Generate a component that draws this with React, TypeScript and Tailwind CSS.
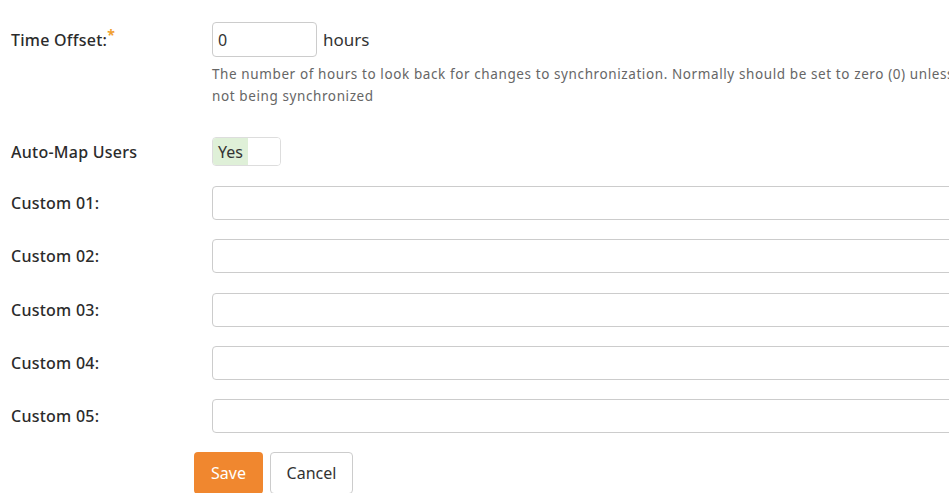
import React from "react";

const font = { fontFamily: '"Noto Sans", "Open Sans", Arial, sans-serif' };

function Label({ children }: { children: React.ReactNode }) {
  return (
    <div className="w-[201px] shrink-0 text-[16px] font-medium tracking-[0.25px] text-[#2b2b2b]">{children}</div>
  );
}

function CustomRow({ label }: { label: string }) {
  return (
    <div className="flex items-center">
      <Label>{label}</Label>
      <input
        className="h-[34px] w-[800px] shrink-0 rounded-[4px] border border-[#ccc] bg-white px-2 outline-none"
        type="text"
      />
    </div>
  );
}

export default function App() {
  return (
    <div className="h-[493px] w-[949px] overflow-hidden bg-white" style={font}>
      <div className="w-[1200px] pl-[11px] pt-[22px]">
        <div className="flex items-center">
          <Label>
            Time Offset:<span className="relative -top-[6px] text-[14px] font-bold text-[#f0a030]">*</span>
          </Label>
          <input
            className="h-[35px] w-[105px] rounded-[4px] border border-[#ccc] bg-white px-[5px] text-[16px] text-[#333] outline-none"
            defaultValue="0"
            type="text"
          />
          <span className="ml-[6px] text-[17px] text-[#333]">hours</span>
        </div>
        <div className="ml-[201px] mt-[6px] whitespace-nowrap text-[13.5px] leading-[22px] tracking-[0.6px] text-[#666]">
          The number of hours to look back for changes to synchronization. Normally should be set to zero (0) unless you find that some changes are
          <br />
          not being synchronized
        </div>
        <div className="mt-[30px] flex items-center">
          <Label>Auto-Map Users</Label>
          <div className="flex h-[29px] w-[69px] overflow-hidden rounded-[4px] border border-[#ddd]">
            <div className="flex w-[35px] items-center justify-center bg-[#dff0d8] text-[16px] text-[#333]">Yes</div>
            <div className="flex-1 bg-white" />
          </div>
        </div>
        <div className="mt-[20px] flex flex-col gap-[19.25px]">
          <CustomRow label="Custom 01:" />
          <CustomRow label="Custom 02:" />
          <CustomRow label="Custom 03:" />
          <CustomRow label="Custom 04:" />
          <CustomRow label="Custom 05:" />
        </div>
        <div className="ml-[183px] mt-[19px] flex gap-[7px]">
          <button className="h-[42px] w-[69px] rounded-[4px] bg-[#f0872f] text-[16px] text-white">Save</button>
          <button className="h-[42px] w-[83px] rounded-[4px] border border-[#ccc] bg-white text-[16px] text-[#333]">Cancel</button>
        </div>
      </div>
    </div>
  );
}
